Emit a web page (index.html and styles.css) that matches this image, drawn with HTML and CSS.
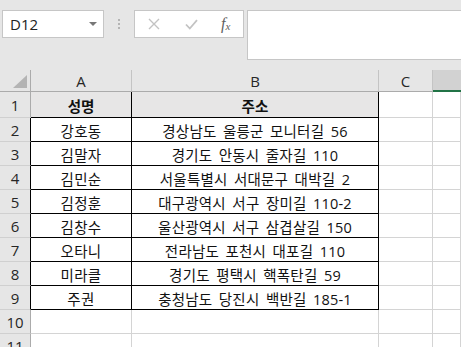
FILE: index.html
```html
<!DOCTYPE html>
<html lang="ko">
<head>
<meta charset="utf-8">
<title>Sheet1</title>
<link rel="stylesheet" href="styles.css">
</head>
<body>
<div class="topbar">
  <div class="namebox">
    <span class="ref">D12</span>
    <span class="caret"></span>
  </div>
  <div class="grip"><i></i><i></i><i></i></div>
  <div class="fxbox">
    <svg class="ico" width="12" height="12" viewBox="0 0 12 12"><path d="M1 1 L11 11 M11 1 L1 11" stroke="#c3c3c3" stroke-width="1.4" fill="none"/></svg>
    <svg class="ico" width="13" height="11" viewBox="0 0 13 11"><path d="M1 5.5 L4.8 9.5 L12 1.2" stroke="#c3c3c3" stroke-width="1.8" fill="none"/></svg>
    <span class="fx">f<sub>x</sub></span>
  </div>
  <div class="formula"></div>
</div>

<div class="sheet">
  <div class="corner"><span class="tri"></span></div>
  <div class="colhead">A</div>
  <div class="colhead">B</div>
  <div class="colhead">C</div>
  <div class="colhead sel"></div>

  <div class="rowhead">1</div>
  <div class="cell th a">성명</div>
  <div class="cell th b">주소</div>
  <div class="cell"></div>
  <div class="cell"></div>

  <div class="rowhead boxed">2</div>
  <div class="cell td a">강호동</div>
  <div class="cell td b">경상남도 울릉군 모니터길 56</div>
  <div class="cell"></div>
  <div class="cell"></div>

  <div class="rowhead boxed">3</div>
  <div class="cell td a">김말자</div>
  <div class="cell td b">경기도 안동시 줄자길 110</div>
  <div class="cell"></div>
  <div class="cell"></div>

  <div class="rowhead boxed">4</div>
  <div class="cell td a">김민순</div>
  <div class="cell td b">서울특별시 서대문구 대박길 2</div>
  <div class="cell"></div>
  <div class="cell"></div>

  <div class="rowhead boxed">5</div>
  <div class="cell td a">김정훈</div>
  <div class="cell td b">대구광역시 서구 장미길 110-2</div>
  <div class="cell"></div>
  <div class="cell"></div>

  <div class="rowhead boxed">6</div>
  <div class="cell td a">김창수</div>
  <div class="cell td b">울산광역시 서구 삼겹살길 150</div>
  <div class="cell"></div>
  <div class="cell"></div>

  <div class="rowhead boxed">7</div>
  <div class="cell td a">오타니</div>
  <div class="cell td b">전라남도 포천시 대포길 110</div>
  <div class="cell"></div>
  <div class="cell"></div>

  <div class="rowhead boxed">8</div>
  <div class="cell td a">미라클</div>
  <div class="cell td b">경기도 평택시 핵폭탄길 59</div>
  <div class="cell"></div>
  <div class="cell"></div>

  <div class="rowhead boxed">9</div>
  <div class="cell td a">주권</div>
  <div class="cell td b">충청남도 당진시 백반길 185-1</div>
  <div class="cell"></div>
  <div class="cell"></div>

  <div class="rowhead">10</div>
  <div class="cell"></div>
  <div class="cell"></div>
  <div class="cell"></div>
  <div class="cell"></div>

  <div class="rowhead">11</div>
  <div class="cell"></div>
  <div class="cell"></div>
  <div class="cell"></div>
  <div class="cell"></div>
</div>
</body>
</html>
```

FILE: styles.css
```css
* { box-sizing: border-box; }

html, body {
  margin: 0;
  padding: 0;
  width: 461px;
  height: 347px;
  overflow: hidden;
  background: #ffffff;
  font-family: "Open Sans", "Noto Sans CJK KR", sans-serif;
}

/* name box + formula bar */
.topbar {
  height: 70px;
  background: #e6e6e6;
  display: flex;
  align-items: flex-start;
  padding-top: 10px;
}

.namebox {
  margin-left: 2px;
  width: 102px;
  height: 28px;
  background: #fff;
  border: 1px solid #c6c6c6;
  display: flex;
  align-items: center;
  justify-content: space-between;
  padding: 0 6px 0 7px;
}

.ref {
  font-size: 15px;
  color: #222;
  line-height: 1;
}

.caret {
  width: 0;
  height: 0;
  border-left: 4px solid transparent;
  border-right: 4px solid transparent;
  border-top: 4px solid #777;
}

.grip {
  width: 30px;
  height: 28px;
  display: flex;
  flex-direction: column;
  align-items: center;
  justify-content: center;
  gap: 2px;
}

.grip i {
  display: block;
  width: 2px;
  height: 2px;
  background: #b4b4b4;
}

.fxbox {
  width: 110px;
  height: 28px;
  background: #fff;
  border: 1px solid #c6c6c6;
  display: flex;
  align-items: center;
  padding-left: 13px;
  gap: 0;
}

.fxbox .ico:first-child { margin-right: 25px; }
.fxbox .ico:nth-child(2) { margin-right: 23px; }

.fx {
  font-family: "Liberation Serif", serif;
  font-style: italic;
  font-size: 16px;
  color: #5f5f5f;
  line-height: 1;
}

.fx sub {
  font-size: 11px;
  vertical-align: -1px;
}

.formula {
  margin-left: 3px;
  flex: 1;
  height: 50px;
  background: #fff;
  border: 1px solid #c6c6c6;
  margin-right: -2px;
}

/* worksheet grid */
.sheet {
  display: grid;
  grid-template-columns: 31px 101px 247px 54px 1fr;
  grid-template-rows: 22px 26px repeat(10, 24px);
}

.corner,
.colhead {
  background: #e6e6e6;
  border-right: 1px solid #c4c4c4;
  border-bottom: 1px solid #ababab;
}

.corner {
  position: relative;
  border-right-color: #ababab;
}

.tri {
  position: absolute;
  left: 13px;
  top: 5px;
  width: 0;
  height: 0;
  border-left: 14px solid transparent;
  border-bottom: 13px solid #b4b4b4;
}

.colhead {
  display: flex;
  align-items: center;
  justify-content: center;
  font-size: 15px;
  color: #262626;
  padding-top: 1px;
}

.colhead.sel {
  background: #d2d2d2;
  border-right: none;
  border-bottom: 2px solid #217346;
}

.rowhead {
  background: #e6e6e6;
  border-right: 1px solid #ababab;
  border-bottom: 1px solid #d0d0d0;
  display: flex;
  align-items: center;
  justify-content: center;
  font-size: 15px;
  color: #262626;
  padding-top: 1px;
}

.rowhead.boxed {
  border-right-color: #000;
}

.cell {
  border-right: 1px solid #d4d4d4;
  border-bottom: 1px solid #d4d4d4;
  display: flex;
  align-items: center;
  justify-content: center;
  font-size: 14.5px;
  color: #111;
  white-space: nowrap;
  padding-top: 2px;
}

.cell.a,
.cell.b {
  border-right-color: #000;
  border-bottom-color: #000;
}

.cell.td.a {
  letter-spacing: 0.3px;
}

.cell.b {
  word-spacing: 2.5px;
  letter-spacing: 0.2px;
}

.cell.th {
  background: #e7e6e6;
  font-weight: 700;
}
```
